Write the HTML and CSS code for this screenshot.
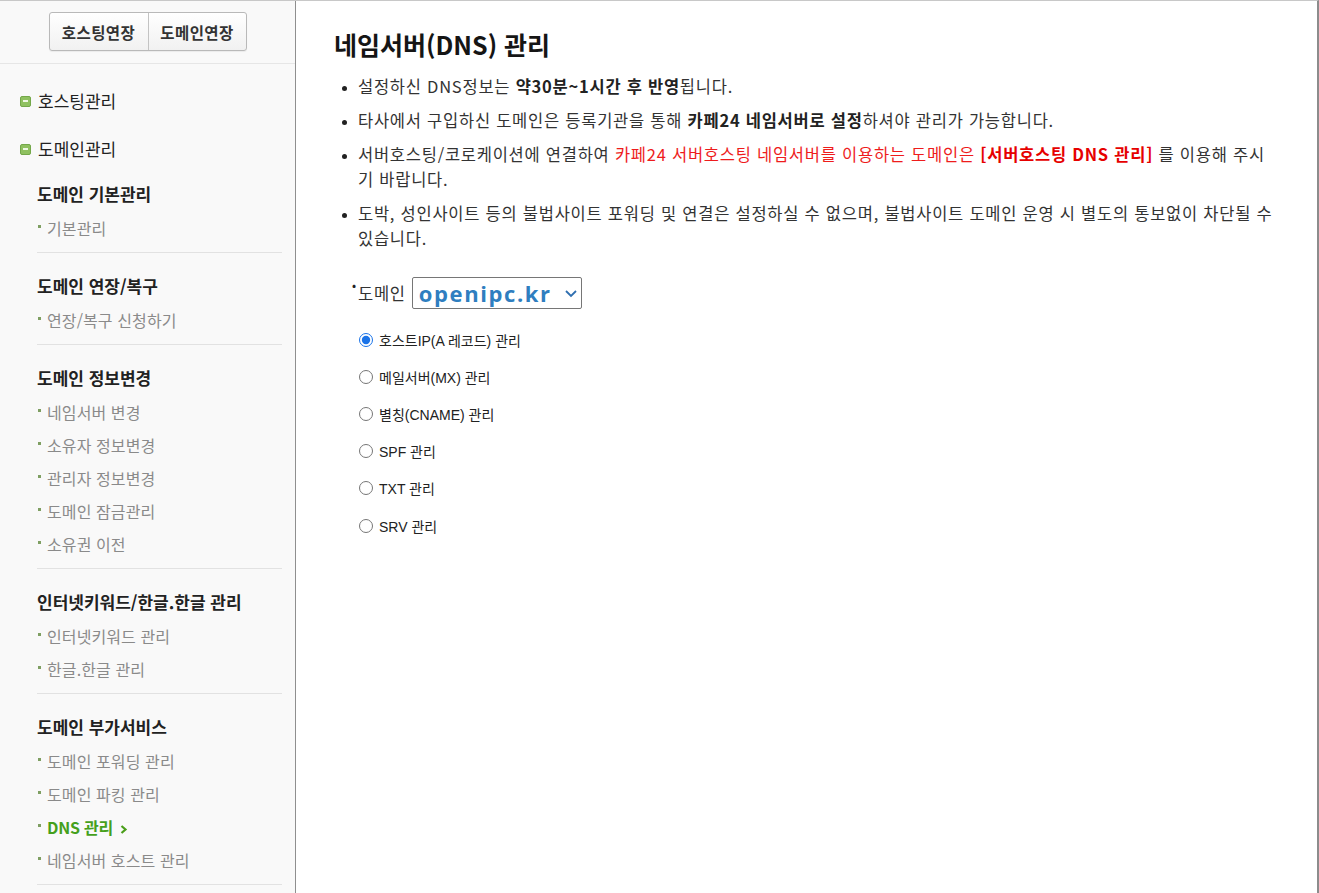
FILE: index.html
```html
<!DOCTYPE html>
<html lang="ko">
<head>
<meta charset="utf-8">
<title>네임서버(DNS) 관리</title>
<link rel="stylesheet" href="styles.css">
</head>
<body>
<div class="page">
  <aside class="sidebar">
    <div class="top-buttons">
      <div class="btn-group">
        <a class="btn">호스팅연장</a>
        <a class="btn">도메인연장</a>
      </div>
    </div>
    <ul class="top-nav">
      <li class="top-item"><span class="minus-icon"></span>호스팅관리</li>
      <li class="top-item"><span class="minus-icon"></span>도메인관리</li>
    </ul>
    <div class="sections">
      <div class="section">
        <h3 class="sec-title">도메인 기본관리</h3>
        <ul class="sub"><li>기본관리</li></ul>
      </div>
      <div class="section">
        <h3 class="sec-title">도메인 연장/복구</h3>
        <ul class="sub"><li>연장/복구 신청하기</li></ul>
      </div>
      <div class="section">
        <h3 class="sec-title">도메인 정보변경</h3>
        <ul class="sub">
          <li>네임서버 변경</li>
          <li>소유자 정보변경</li>
          <li>관리자 정보변경</li>
          <li>도메인 잠금관리</li>
          <li>소유권 이전</li>
        </ul>
      </div>
      <div class="section">
        <h3 class="sec-title">인터넷키워드/한글.한글 관리</h3>
        <ul class="sub">
          <li>인터넷키워드 관리</li>
          <li>한글.한글 관리</li>
        </ul>
      </div>
      <div class="section">
        <h3 class="sec-title">도메인 부가서비스</h3>
        <ul class="sub">
          <li>도메인 포워딩 관리</li>
          <li>도메인 파킹 관리</li>
          <li class="active">DNS 관리<svg class="chev" width="8" height="9" viewBox="0 0 8 9"><path d="M1.5 1 L5.5 4.5 L1.5 8" fill="none" stroke="#4a9e1a" stroke-width="2.2"/></svg></li>
          <li>네임서버 호스트 관리</li>
        </ul>
      </div>
    </div>
  </aside>
  <main class="main">
    <h1 class="title">네임서버(DNS) 관리</h1>
    <ul class="notes">
      <li>설정하신 DNS정보는 <b>약30분~1시간 후 반영</b>됩니다.</li>
      <li>타사에서 구입하신 도메인은 등록기관을 통해 <b>카페24 네임서버로 설정</b>하셔야 관리가 가능합니다.</li>
      <li>서버호스팅/코로케이션에 연결하여 <span class="red">카페24 서버호스팅 네임서버를 이용하는 도메인은</span> <b class="red-b">[서버호스팅 DNS 관리]</b> 를 이용해 주시기 바랍니다.</li>
      <li>도박, 성인사이트 등의 불법사이트 포워딩 및 연결은 설정하실 수 없으며, 불법사이트 도메인 운영 시 별도의 통보없이 차단될 수 있습니다.</li>
    </ul>
    <div class="domain-row">
      <span class="dot">•</span>
      <span class="domain-label">도메인</span>
      <div class="select-box">
        <span class="select-value">openipc.kr</span>
        <svg width="14" height="9" viewBox="0 0 14 9"><path d="M2 2 L7 7 L12 2" fill="none" stroke="#2f6fb0" stroke-width="1.8"/></svg>
      </div>
    </div>
    <ul class="radios">
      <li><input type="radio" name="rt" checked><label>호스트IP(A 레코드) 관리</label></li>
      <li><input type="radio" name="rt"><label>메일서버(MX) 관리</label></li>
      <li><input type="radio" name="rt"><label>별칭(CNAME) 관리</label></li>
      <li><input type="radio" name="rt"><label>SPF 관리</label></li>
      <li><input type="radio" name="rt"><label>TXT 관리</label></li>
      <li><input type="radio" name="rt"><label>SRV 관리</label></li>
    </ul>
  </main>
</div>
</body>
</html>
```
FILE: styles.css
```css
* { box-sizing: border-box; }
html, body { margin: 0; padding: 0; background: #fff; }
body {
  font-family: "Noto Sans CJK KR", "Noto Sans", sans-serif;
  color: #333;
}
ul { list-style: none; margin: 0; padding: 0; }
h1, h3 { margin: 0; }

.page {
  display: flex;
  border-top: 1px solid #c8c8c8;
  border-right: 2px solid #8c8c8c;
  min-height: 893px;
  width: 1319px;
}

/* Sidebar */
.sidebar {
  width: 296px;
  flex: none;
  background: #f9f9f9;
  border-right: 1px solid #8f8f8f;
}
.top-buttons {
  display: flex;
  justify-content: center;
  padding: 11px 0 12px;
  border-bottom: 1px solid #e6e6e6;
}
.btn-group {
  display: flex;
  border: 1px solid #b9b9b9;
  border-radius: 3px;
  background: linear-gradient(#ffffff, #f1f1f1);
  box-shadow: 0 1px 1px rgba(0,0,0,0.06);
}
.btn {
  width: 98px;
  height: 37px;
  display: flex;
  align-items: center;
  justify-content: center;
  font-size: 15.5px;
  font-weight: 700;
  color: #333;
  letter-spacing: 0.4px;
}
.btn + .btn { border-left: 1px solid #c3c3c3; }

.top-nav { padding: 3px 0 0 20px; }
.top-item {
  margin-top: 20px;
  height: 28px;
  line-height: 28px;
  font-size: 17px;
  color: #222;
  display: flex;
  align-items: center;
}
.minus-icon {
  width: 11px;
  height: 11px;
  border-radius: 2px;
  background: #8fc160;
  border: 1px solid #74a84a;
  margin-right: 7px;
  position: relative;
  flex: none;
}
.minus-icon::after {
  content: "";
  position: absolute;
  left: 2px; right: 2px; top: 3.5px;
  height: 2px;
  background: #eef7e4;
}

.sections { margin: -2px 13px 0 37px; }
.section {
  padding: 20px 0 7px;
  border-bottom: 1px solid #e2e2e2;
}
.sec-title {
  font-size: 17px;
  line-height: 26px;
  font-weight: 700;
  color: #222;
  margin-bottom: 5px;
}
.sub li {
  position: relative;
  padding-left: 10px;
  line-height: 33px;
  font-size: 16px;
  color: #8a8a8a;
  letter-spacing: 0.1px;
}
.sub li::before {
  content: "";
  position: absolute;
  left: 1px;
  top: 13px;
  width: 3px;
  height: 3px;
  background: #7f9f62;
}
.sub li.active {
  color: #45a01c;
  font-weight: 700;
  letter-spacing: -0.2px;
}
.chev { margin-left: 7px; }

/* Main */
.main {
  flex: 1;
  padding: 28px 40px 0 38px;
}
.title {
  font-size: 25px;
  line-height: 30px;
  font-weight: 700;
  color: #151515;
}
.notes {
  margin-top: 15px;
  padding-left: 24px;
  list-style: disc outside;
}
.notes li {
  font-size: 16.5px;
  line-height: 25px;
  margin-bottom: 9px;
  color: #333;
  letter-spacing: 0.75px;
}
.notes li::marker { font-size: 12px; color: #222; }
.notes b { color: #222; }
.notes .red { color: #ee1c1c; }
.notes .red-b { color: #e60000; }

.domain-row {
  display: flex;
  align-items: center;
  margin-top: 26px;
  padding-left: 18px;
  height: 32px;
}
.dot {
  font-size: 12px;
  align-self: flex-start;
  line-height: 16px;
  color: #222;
  width: 6px;
}
.domain-label {
  font-size: 16.5px;
  letter-spacing: 0.75px;
  margin-right: 6px;
  color: #333;
}
.select-box {
  width: 170px;
  height: 32px;
  border: 1px solid #767676;
  border-radius: 2px;
  background: #fff;
  display: flex;
  align-items: center;
  justify-content: space-between;
  padding: 0 3px 0 6px;
}
.select-value {
  font-family: "Open Sans", "Noto Sans", sans-serif;
  font-weight: 700;
  font-size: 22px;
  color: #2f7ec0;
  letter-spacing: 1.6px;
}

.radios { margin-top: 12px; padding-left: 24px; }
.radios li {
  display: flex;
  align-items: center;
  height: 37.2px;
}
.radios input {
  margin: 0 6px 0 1px;
  width: 14px;
  height: 14px;
  accent-color: #1a73e8;
}
.radios label {
  font-family: "Liberation Sans", "Noto Sans CJK KR", sans-serif;
  font-size: 14px;
  color: #222;
}
```
